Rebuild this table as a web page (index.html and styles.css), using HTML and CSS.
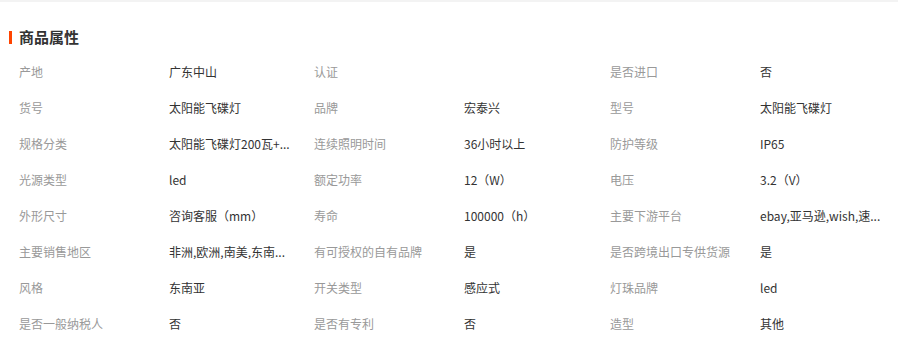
FILE: index.html
```html
<!DOCTYPE html>
<html lang="zh-CN">
<head>
<meta charset="utf-8">
<title>商品属性</title>
<link rel="stylesheet" href="styles.css">
</head>
<body>
<section class="attrs">
  <h2 class="attrs-title">商品属性</h2>
  <div class="attrs-grid">
    <div class="label">产地</div><div class="value">广东中山</div>
    <div class="label">认证</div><div class="value"></div>
    <div class="label">是否进口</div><div class="value">否</div>

    <div class="label">货号</div><div class="value">太阳能飞碟灯</div>
    <div class="label">品牌</div><div class="value">宏泰兴</div>
    <div class="label">型号</div><div class="value">太阳能飞碟灯</div>

    <div class="label">规格分类</div><div class="value">太阳能飞碟灯200瓦+...</div>
    <div class="label">连续照明时间</div><div class="value">36小时以上</div>
    <div class="label">防护等级</div><div class="value">IP65</div>

    <div class="label">光源类型</div><div class="value">led</div>
    <div class="label">额定功率</div><div class="value">12（W）</div>
    <div class="label">电压</div><div class="value">3.2（V）</div>

    <div class="label">外形尺寸</div><div class="value">咨询客服（mm）</div>
    <div class="label">寿命</div><div class="value">100000（h）</div>
    <div class="label">主要下游平台</div><div class="value">ebay,亚马逊,wish,速...</div>

    <div class="label">主要销售地区</div><div class="value">非洲,欧洲,南美,东南...</div>
    <div class="label">有可授权的自有品牌</div><div class="value">是</div>
    <div class="label">是否跨境出口专供货源</div><div class="value">是</div>

    <div class="label">风格</div><div class="value">东南亚</div>
    <div class="label">开关类型</div><div class="value">感应式</div>
    <div class="label">灯珠品牌</div><div class="value">led</div>

    <div class="label">是否一般纳税人</div><div class="value">否</div>
    <div class="label">是否有专利</div><div class="value">否</div>
    <div class="label">造型</div><div class="value">其他</div>
  </div>
</section>
</body>
</html>
```

FILE: styles.css
```css
html, body {
  margin: 0;
  padding: 0;
  background: #fff;
}

body {
  font-family: "Microsoft YaHei", "Noto Sans CJK SC", "DejaVu Sans", sans-serif;
  font-size: 12px;
  color: #333;
  overflow: hidden;
}

.attrs {
  border-top: 2px solid #f3f3f3;
  width: 898px;
}

.attrs-title {
  display: flex;
  align-items: center;
  margin: 27px 0 0 0;
  padding-left: 9px;
  height: 16px;
  line-height: 16px;
  font-size: 15px;
  font-weight: bold;
  color: #333;
}

.attrs-title::before {
  content: "";
  display: block;
  width: 3px;
  height: 13px;
  background: #ff4400;
  margin-right: 7px;
}

.attrs-grid {
  display: grid;
  grid-template-columns: 150px 145px 150px 146px 150px 1fr;
  grid-auto-rows: 36px;
  margin-top: 9px;
  padding-left: 19px;
}

.label,
.value {
  line-height: 36px;
  white-space: nowrap;
}

.label {
  color: #999;
}

.value {
  color: #333;
}
```
